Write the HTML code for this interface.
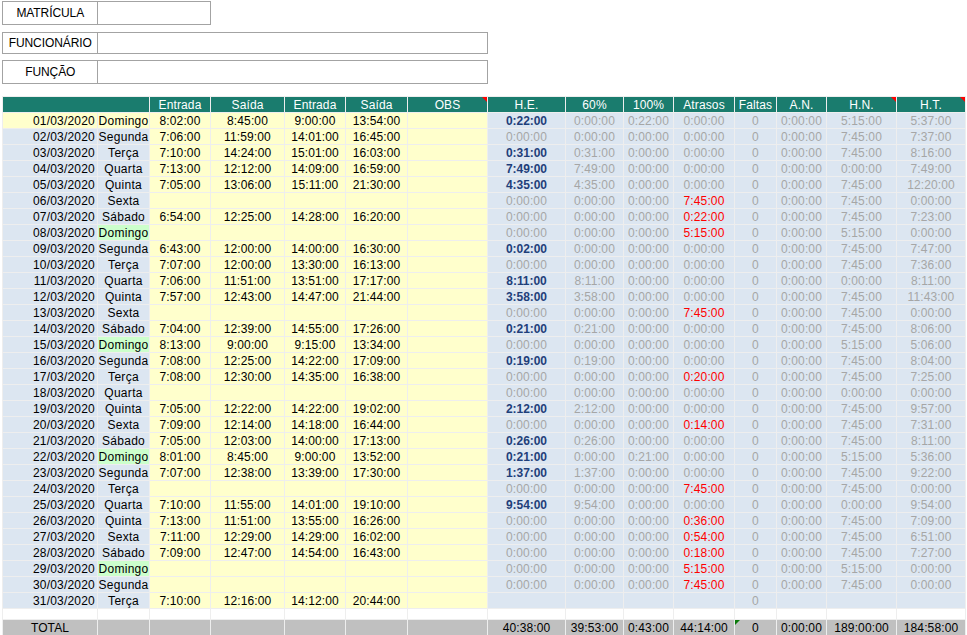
<!DOCTYPE html>
<html lang="pt-BR"><head><meta charset="utf-8"><title>Folha de ponto</title>
<style>
html,body{margin:0;padding:0;background:#fff}
body{width:967px;height:635px;position:relative;overflow:hidden;font-family:"Liberation Sans",Arial,sans-serif;font-size:12px;color:#000}
.box{position:absolute;border:1px solid #a3a3a3;box-sizing:border-box;background:#fff}
.box span{letter-spacing:-0.08px;text-indent:0.5px;position:absolute;left:0;top:0;width:94px;height:100%;border-right:1px solid #a3a3a3;text-align:center;box-sizing:content-box}
.grid{position:absolute;left:2px;top:96px;width:964px;height:539px;background:#eee}
.c{position:absolute;text-align:center;line-height:16px;white-space:nowrap;overflow:visible;letter-spacing:0.12px}
.h{background:#1a7c6e;color:#fff}
.y{background:#ffffcc}
.b{background:#dce6f1}
.g{background:#ccffcc}
.w{background:#fff}
.t{background:#c0c0c0}
.dt{text-align:right;box-sizing:border-box;padding-right:2px;letter-spacing:0.2px}
.gy{color:#a6a6a6}
.rd{color:#f00}
.bb{color:#1f3f7a;font-weight:bold;letter-spacing:-0.05px}
.wd{letter-spacing:0.3px}
.r{position:absolute;right:0;top:0;width:0;height:0;border-top:5px solid #f00;border-left:5px solid transparent}
.gt{position:absolute;left:0;top:0;width:0;height:0;border-top:5px solid #0a7a0a;border-right:5px solid transparent}
</style></head><body>
<div class="box" style="left:2px;top:1px;width:209px;height:24px"><span style="line-height:22px">MATRÍCULA</span></div>
<div class="box" style="left:2px;top:32px;width:486px;height:22px"><span style="line-height:20px">FUNCIONÁRIO</span></div>
<div class="box" style="left:2px;top:60px;width:486px;height:24px"><span style="line-height:22px">FUNÇÃO</span></div>
<div class="grid"></div>
<div class="c h" style="left:3px;top:97px;width:146px;height:15px"></div>
<div class="c h" style="left:150px;top:97px;width:60px;height:15px">Entrada</div>
<div class="c h" style="left:211px;top:97px;width:73px;height:15px">Saída</div>
<div class="c h" style="left:285px;top:97px;width:60px;height:15px">Entrada</div>
<div class="c h" style="left:346px;top:97px;width:61px;height:15px">Saída</div>
<div class="c h" style="left:408px;top:97px;width:79px;height:15px">OBS<i class="r"></i></div>
<div class="c h" style="left:488px;top:97px;width:77px;height:15px">H.E.</div>
<div class="c h" style="left:566px;top:97px;width:57px;height:15px">60%</div>
<div class="c h" style="left:624px;top:97px;width:49px;height:15px">100%</div>
<div class="c h" style="left:674px;top:97px;width:60px;height:15px">Atrasos</div>
<div class="c h" style="left:735px;top:97px;width:41px;height:15px">Faltas</div>
<div class="c h" style="left:777px;top:97px;width:49px;height:15px">A.N.</div>
<div class="c h" style="left:827px;top:97px;width:69px;height:15px">H.N.<i class="r"></i></div>
<div class="c h" style="left:897px;top:97px;width:68px;height:15px">H.T.<i class="r"></i></div>
<div class="c y dt" style="left:3px;top:113px;width:94px;height:15px">01/03/2020</div>
<div class="c y wd" style="left:98px;top:113px;width:51px;height:15px">Domingo</div>
<div class="c y" style="left:150px;top:113px;width:60px;height:15px">8:02:00</div>
<div class="c y" style="left:211px;top:113px;width:73px;height:15px">8:45:00</div>
<div class="c y" style="left:285px;top:113px;width:60px;height:15px">9:00:00</div>
<div class="c y" style="left:346px;top:113px;width:61px;height:15px">13:54:00</div>
<div class="c y" style="left:408px;top:113px;width:79px;height:15px"></div>
<div class="c b bb" style="left:488px;top:113px;width:77px;height:15px">0:22:00</div>
<div class="c b gy" style="left:566px;top:113px;width:57px;height:15px">0:00:00</div>
<div class="c b gy" style="left:624px;top:113px;width:49px;height:15px">0:22:00</div>
<div class="c b gy" style="left:674px;top:113px;width:60px;height:15px">0:00:00</div>
<div class="c b gy" style="left:735px;top:113px;width:41px;height:15px">0</div>
<div class="c b gy" style="left:777px;top:113px;width:49px;height:15px">0:00:00</div>
<div class="c b gy" style="left:827px;top:113px;width:69px;height:15px">5:15:00</div>
<div class="c b gy" style="left:897px;top:113px;width:68px;height:15px">5:37:00</div>
<div class="c b dt" style="left:3px;top:129px;width:94px;height:15px">02/03/2020</div>
<div class="c b wd" style="left:98px;top:129px;width:51px;height:15px">Segunda</div>
<div class="c y" style="left:150px;top:129px;width:60px;height:15px">7:06:00</div>
<div class="c y" style="left:211px;top:129px;width:73px;height:15px">11:59:00</div>
<div class="c y" style="left:285px;top:129px;width:60px;height:15px">14:01:00</div>
<div class="c y" style="left:346px;top:129px;width:61px;height:15px">16:45:00</div>
<div class="c y" style="left:408px;top:129px;width:79px;height:15px"></div>
<div class="c b gy" style="left:488px;top:129px;width:77px;height:15px">0:00:00</div>
<div class="c b gy" style="left:566px;top:129px;width:57px;height:15px">0:00:00</div>
<div class="c b gy" style="left:624px;top:129px;width:49px;height:15px">0:00:00</div>
<div class="c b gy" style="left:674px;top:129px;width:60px;height:15px">0:00:00</div>
<div class="c b gy" style="left:735px;top:129px;width:41px;height:15px">0</div>
<div class="c b gy" style="left:777px;top:129px;width:49px;height:15px">0:00:00</div>
<div class="c b gy" style="left:827px;top:129px;width:69px;height:15px">7:45:00</div>
<div class="c b gy" style="left:897px;top:129px;width:68px;height:15px">7:37:00</div>
<div class="c b dt" style="left:3px;top:145px;width:94px;height:15px">03/03/2020</div>
<div class="c b wd" style="left:98px;top:145px;width:51px;height:15px">Terça</div>
<div class="c y" style="left:150px;top:145px;width:60px;height:15px">7:10:00</div>
<div class="c y" style="left:211px;top:145px;width:73px;height:15px">14:24:00</div>
<div class="c y" style="left:285px;top:145px;width:60px;height:15px">15:01:00</div>
<div class="c y" style="left:346px;top:145px;width:61px;height:15px">16:03:00</div>
<div class="c y" style="left:408px;top:145px;width:79px;height:15px"></div>
<div class="c b bb" style="left:488px;top:145px;width:77px;height:15px">0:31:00</div>
<div class="c b gy" style="left:566px;top:145px;width:57px;height:15px">0:31:00</div>
<div class="c b gy" style="left:624px;top:145px;width:49px;height:15px">0:00:00</div>
<div class="c b gy" style="left:674px;top:145px;width:60px;height:15px">0:00:00</div>
<div class="c b gy" style="left:735px;top:145px;width:41px;height:15px">0</div>
<div class="c b gy" style="left:777px;top:145px;width:49px;height:15px">0:00:00</div>
<div class="c b gy" style="left:827px;top:145px;width:69px;height:15px">7:45:00</div>
<div class="c b gy" style="left:897px;top:145px;width:68px;height:15px">8:16:00</div>
<div class="c b dt" style="left:3px;top:161px;width:94px;height:15px">04/03/2020</div>
<div class="c b wd" style="left:98px;top:161px;width:51px;height:15px">Quarta</div>
<div class="c y" style="left:150px;top:161px;width:60px;height:15px">7:13:00</div>
<div class="c y" style="left:211px;top:161px;width:73px;height:15px">12:12:00</div>
<div class="c y" style="left:285px;top:161px;width:60px;height:15px">14:09:00</div>
<div class="c y" style="left:346px;top:161px;width:61px;height:15px">16:59:00</div>
<div class="c y" style="left:408px;top:161px;width:79px;height:15px"></div>
<div class="c b bb" style="left:488px;top:161px;width:77px;height:15px">7:49:00</div>
<div class="c b gy" style="left:566px;top:161px;width:57px;height:15px">7:49:00</div>
<div class="c b gy" style="left:624px;top:161px;width:49px;height:15px">0:00:00</div>
<div class="c b gy" style="left:674px;top:161px;width:60px;height:15px">0:00:00</div>
<div class="c b gy" style="left:735px;top:161px;width:41px;height:15px">0</div>
<div class="c b gy" style="left:777px;top:161px;width:49px;height:15px">0:00:00</div>
<div class="c b gy" style="left:827px;top:161px;width:69px;height:15px">0:00:00</div>
<div class="c b gy" style="left:897px;top:161px;width:68px;height:15px">7:49:00</div>
<div class="c b dt" style="left:3px;top:177px;width:94px;height:15px">05/03/2020</div>
<div class="c b wd" style="left:98px;top:177px;width:51px;height:15px">Quinta</div>
<div class="c y" style="left:150px;top:177px;width:60px;height:15px">7:05:00</div>
<div class="c y" style="left:211px;top:177px;width:73px;height:15px">13:06:00</div>
<div class="c y" style="left:285px;top:177px;width:60px;height:15px">15:11:00</div>
<div class="c y" style="left:346px;top:177px;width:61px;height:15px">21:30:00</div>
<div class="c y" style="left:408px;top:177px;width:79px;height:15px"></div>
<div class="c b bb" style="left:488px;top:177px;width:77px;height:15px">4:35:00</div>
<div class="c b gy" style="left:566px;top:177px;width:57px;height:15px">4:35:00</div>
<div class="c b gy" style="left:624px;top:177px;width:49px;height:15px">0:00:00</div>
<div class="c b gy" style="left:674px;top:177px;width:60px;height:15px">0:00:00</div>
<div class="c b gy" style="left:735px;top:177px;width:41px;height:15px">0</div>
<div class="c b gy" style="left:777px;top:177px;width:49px;height:15px">0:00:00</div>
<div class="c b gy" style="left:827px;top:177px;width:69px;height:15px">7:45:00</div>
<div class="c b gy" style="left:897px;top:177px;width:68px;height:15px">12:20:00</div>
<div class="c b dt" style="left:3px;top:193px;width:94px;height:15px">06/03/2020</div>
<div class="c b wd" style="left:98px;top:193px;width:51px;height:15px">Sexta</div>
<div class="c y" style="left:150px;top:193px;width:60px;height:15px"></div>
<div class="c y" style="left:211px;top:193px;width:73px;height:15px"></div>
<div class="c y" style="left:285px;top:193px;width:60px;height:15px"></div>
<div class="c y" style="left:346px;top:193px;width:61px;height:15px"></div>
<div class="c y" style="left:408px;top:193px;width:79px;height:15px"></div>
<div class="c b gy" style="left:488px;top:193px;width:77px;height:15px">0:00:00</div>
<div class="c b gy" style="left:566px;top:193px;width:57px;height:15px">0:00:00</div>
<div class="c b gy" style="left:624px;top:193px;width:49px;height:15px">0:00:00</div>
<div class="c b rd" style="left:674px;top:193px;width:60px;height:15px">7:45:00</div>
<div class="c b gy" style="left:735px;top:193px;width:41px;height:15px">0</div>
<div class="c b gy" style="left:777px;top:193px;width:49px;height:15px">0:00:00</div>
<div class="c b gy" style="left:827px;top:193px;width:69px;height:15px">7:45:00</div>
<div class="c b gy" style="left:897px;top:193px;width:68px;height:15px">0:00:00</div>
<div class="c b dt" style="left:3px;top:209px;width:94px;height:15px">07/03/2020</div>
<div class="c b wd" style="left:98px;top:209px;width:51px;height:15px">Sábado</div>
<div class="c y" style="left:150px;top:209px;width:60px;height:15px">6:54:00</div>
<div class="c y" style="left:211px;top:209px;width:73px;height:15px">12:25:00</div>
<div class="c y" style="left:285px;top:209px;width:60px;height:15px">14:28:00</div>
<div class="c y" style="left:346px;top:209px;width:61px;height:15px">16:20:00</div>
<div class="c y" style="left:408px;top:209px;width:79px;height:15px"></div>
<div class="c b gy" style="left:488px;top:209px;width:77px;height:15px">0:00:00</div>
<div class="c b gy" style="left:566px;top:209px;width:57px;height:15px">0:00:00</div>
<div class="c b gy" style="left:624px;top:209px;width:49px;height:15px">0:00:00</div>
<div class="c b rd" style="left:674px;top:209px;width:60px;height:15px">0:22:00</div>
<div class="c b gy" style="left:735px;top:209px;width:41px;height:15px">0</div>
<div class="c b gy" style="left:777px;top:209px;width:49px;height:15px">0:00:00</div>
<div class="c b gy" style="left:827px;top:209px;width:69px;height:15px">7:45:00</div>
<div class="c b gy" style="left:897px;top:209px;width:68px;height:15px">7:23:00</div>
<div class="c b dt" style="left:3px;top:225px;width:94px;height:15px">08/03/2020</div>
<div class="c g wd" style="left:98px;top:225px;width:51px;height:15px">Domingo</div>
<div class="c y" style="left:150px;top:225px;width:60px;height:15px"></div>
<div class="c y" style="left:211px;top:225px;width:73px;height:15px"></div>
<div class="c y" style="left:285px;top:225px;width:60px;height:15px"></div>
<div class="c y" style="left:346px;top:225px;width:61px;height:15px"></div>
<div class="c y" style="left:408px;top:225px;width:79px;height:15px"></div>
<div class="c b gy" style="left:488px;top:225px;width:77px;height:15px">0:00:00</div>
<div class="c b gy" style="left:566px;top:225px;width:57px;height:15px">0:00:00</div>
<div class="c b gy" style="left:624px;top:225px;width:49px;height:15px">0:00:00</div>
<div class="c b rd" style="left:674px;top:225px;width:60px;height:15px">5:15:00</div>
<div class="c b gy" style="left:735px;top:225px;width:41px;height:15px">0</div>
<div class="c b gy" style="left:777px;top:225px;width:49px;height:15px">0:00:00</div>
<div class="c b gy" style="left:827px;top:225px;width:69px;height:15px">5:15:00</div>
<div class="c b gy" style="left:897px;top:225px;width:68px;height:15px">0:00:00</div>
<div class="c b dt" style="left:3px;top:241px;width:94px;height:15px">09/03/2020</div>
<div class="c b wd" style="left:98px;top:241px;width:51px;height:15px">Segunda</div>
<div class="c y" style="left:150px;top:241px;width:60px;height:15px">6:43:00</div>
<div class="c y" style="left:211px;top:241px;width:73px;height:15px">12:00:00</div>
<div class="c y" style="left:285px;top:241px;width:60px;height:15px">14:00:00</div>
<div class="c y" style="left:346px;top:241px;width:61px;height:15px">16:30:00</div>
<div class="c y" style="left:408px;top:241px;width:79px;height:15px"></div>
<div class="c b bb" style="left:488px;top:241px;width:77px;height:15px">0:02:00</div>
<div class="c b gy" style="left:566px;top:241px;width:57px;height:15px">0:00:00</div>
<div class="c b gy" style="left:624px;top:241px;width:49px;height:15px">0:00:00</div>
<div class="c b gy" style="left:674px;top:241px;width:60px;height:15px">0:00:00</div>
<div class="c b gy" style="left:735px;top:241px;width:41px;height:15px">0</div>
<div class="c b gy" style="left:777px;top:241px;width:49px;height:15px">0:00:00</div>
<div class="c b gy" style="left:827px;top:241px;width:69px;height:15px">7:45:00</div>
<div class="c b gy" style="left:897px;top:241px;width:68px;height:15px">7:47:00</div>
<div class="c b dt" style="left:3px;top:257px;width:94px;height:15px">10/03/2020</div>
<div class="c b wd" style="left:98px;top:257px;width:51px;height:15px">Terça</div>
<div class="c y" style="left:150px;top:257px;width:60px;height:15px">7:07:00</div>
<div class="c y" style="left:211px;top:257px;width:73px;height:15px">12:00:00</div>
<div class="c y" style="left:285px;top:257px;width:60px;height:15px">13:30:00</div>
<div class="c y" style="left:346px;top:257px;width:61px;height:15px">16:13:00</div>
<div class="c y" style="left:408px;top:257px;width:79px;height:15px"></div>
<div class="c b gy" style="left:488px;top:257px;width:77px;height:15px">0:00:00</div>
<div class="c b gy" style="left:566px;top:257px;width:57px;height:15px">0:00:00</div>
<div class="c b gy" style="left:624px;top:257px;width:49px;height:15px">0:00:00</div>
<div class="c b gy" style="left:674px;top:257px;width:60px;height:15px">0:00:00</div>
<div class="c b gy" style="left:735px;top:257px;width:41px;height:15px">0</div>
<div class="c b gy" style="left:777px;top:257px;width:49px;height:15px">0:00:00</div>
<div class="c b gy" style="left:827px;top:257px;width:69px;height:15px">7:45:00</div>
<div class="c b gy" style="left:897px;top:257px;width:68px;height:15px">7:36:00</div>
<div class="c b dt" style="left:3px;top:273px;width:94px;height:15px">11/03/2020</div>
<div class="c b wd" style="left:98px;top:273px;width:51px;height:15px">Quarta</div>
<div class="c y" style="left:150px;top:273px;width:60px;height:15px">7:06:00</div>
<div class="c y" style="left:211px;top:273px;width:73px;height:15px">11:51:00</div>
<div class="c y" style="left:285px;top:273px;width:60px;height:15px">13:51:00</div>
<div class="c y" style="left:346px;top:273px;width:61px;height:15px">17:17:00</div>
<div class="c y" style="left:408px;top:273px;width:79px;height:15px"></div>
<div class="c b bb" style="left:488px;top:273px;width:77px;height:15px">8:11:00</div>
<div class="c b gy" style="left:566px;top:273px;width:57px;height:15px">8:11:00</div>
<div class="c b gy" style="left:624px;top:273px;width:49px;height:15px">0:00:00</div>
<div class="c b gy" style="left:674px;top:273px;width:60px;height:15px">0:00:00</div>
<div class="c b gy" style="left:735px;top:273px;width:41px;height:15px">0</div>
<div class="c b gy" style="left:777px;top:273px;width:49px;height:15px">0:00:00</div>
<div class="c b gy" style="left:827px;top:273px;width:69px;height:15px">0:00:00</div>
<div class="c b gy" style="left:897px;top:273px;width:68px;height:15px">8:11:00</div>
<div class="c b dt" style="left:3px;top:289px;width:94px;height:15px">12/03/2020</div>
<div class="c b wd" style="left:98px;top:289px;width:51px;height:15px">Quinta</div>
<div class="c y" style="left:150px;top:289px;width:60px;height:15px">7:57:00</div>
<div class="c y" style="left:211px;top:289px;width:73px;height:15px">12:43:00</div>
<div class="c y" style="left:285px;top:289px;width:60px;height:15px">14:47:00</div>
<div class="c y" style="left:346px;top:289px;width:61px;height:15px">21:44:00</div>
<div class="c y" style="left:408px;top:289px;width:79px;height:15px"></div>
<div class="c b bb" style="left:488px;top:289px;width:77px;height:15px">3:58:00</div>
<div class="c b gy" style="left:566px;top:289px;width:57px;height:15px">3:58:00</div>
<div class="c b gy" style="left:624px;top:289px;width:49px;height:15px">0:00:00</div>
<div class="c b gy" style="left:674px;top:289px;width:60px;height:15px">0:00:00</div>
<div class="c b gy" style="left:735px;top:289px;width:41px;height:15px">0</div>
<div class="c b gy" style="left:777px;top:289px;width:49px;height:15px">0:00:00</div>
<div class="c b gy" style="left:827px;top:289px;width:69px;height:15px">7:45:00</div>
<div class="c b gy" style="left:897px;top:289px;width:68px;height:15px">11:43:00</div>
<div class="c b dt" style="left:3px;top:305px;width:94px;height:15px">13/03/2020</div>
<div class="c b wd" style="left:98px;top:305px;width:51px;height:15px">Sexta</div>
<div class="c y" style="left:150px;top:305px;width:60px;height:15px"></div>
<div class="c y" style="left:211px;top:305px;width:73px;height:15px"></div>
<div class="c y" style="left:285px;top:305px;width:60px;height:15px"></div>
<div class="c y" style="left:346px;top:305px;width:61px;height:15px"></div>
<div class="c y" style="left:408px;top:305px;width:79px;height:15px"></div>
<div class="c b gy" style="left:488px;top:305px;width:77px;height:15px">0:00:00</div>
<div class="c b gy" style="left:566px;top:305px;width:57px;height:15px">0:00:00</div>
<div class="c b gy" style="left:624px;top:305px;width:49px;height:15px">0:00:00</div>
<div class="c b rd" style="left:674px;top:305px;width:60px;height:15px">7:45:00</div>
<div class="c b gy" style="left:735px;top:305px;width:41px;height:15px">0</div>
<div class="c b gy" style="left:777px;top:305px;width:49px;height:15px">0:00:00</div>
<div class="c b gy" style="left:827px;top:305px;width:69px;height:15px">7:45:00</div>
<div class="c b gy" style="left:897px;top:305px;width:68px;height:15px">0:00:00</div>
<div class="c b dt" style="left:3px;top:321px;width:94px;height:15px">14/03/2020</div>
<div class="c b wd" style="left:98px;top:321px;width:51px;height:15px">Sábado</div>
<div class="c y" style="left:150px;top:321px;width:60px;height:15px">7:04:00</div>
<div class="c y" style="left:211px;top:321px;width:73px;height:15px">12:39:00</div>
<div class="c y" style="left:285px;top:321px;width:60px;height:15px">14:55:00</div>
<div class="c y" style="left:346px;top:321px;width:61px;height:15px">17:26:00</div>
<div class="c y" style="left:408px;top:321px;width:79px;height:15px"></div>
<div class="c b bb" style="left:488px;top:321px;width:77px;height:15px">0:21:00</div>
<div class="c b gy" style="left:566px;top:321px;width:57px;height:15px">0:21:00</div>
<div class="c b gy" style="left:624px;top:321px;width:49px;height:15px">0:00:00</div>
<div class="c b gy" style="left:674px;top:321px;width:60px;height:15px">0:00:00</div>
<div class="c b gy" style="left:735px;top:321px;width:41px;height:15px">0</div>
<div class="c b gy" style="left:777px;top:321px;width:49px;height:15px">0:00:00</div>
<div class="c b gy" style="left:827px;top:321px;width:69px;height:15px">7:45:00</div>
<div class="c b gy" style="left:897px;top:321px;width:68px;height:15px">8:06:00</div>
<div class="c b dt" style="left:3px;top:337px;width:94px;height:15px">15/03/2020</div>
<div class="c g wd" style="left:98px;top:337px;width:51px;height:15px">Domingo</div>
<div class="c y" style="left:150px;top:337px;width:60px;height:15px">8:13:00</div>
<div class="c y" style="left:211px;top:337px;width:73px;height:15px">9:00:00</div>
<div class="c y" style="left:285px;top:337px;width:60px;height:15px">9:15:00</div>
<div class="c y" style="left:346px;top:337px;width:61px;height:15px">13:34:00</div>
<div class="c y" style="left:408px;top:337px;width:79px;height:15px"></div>
<div class="c b gy" style="left:488px;top:337px;width:77px;height:15px">0:00:00</div>
<div class="c b gy" style="left:566px;top:337px;width:57px;height:15px">0:00:00</div>
<div class="c b gy" style="left:624px;top:337px;width:49px;height:15px">0:00:00</div>
<div class="c b gy" style="left:674px;top:337px;width:60px;height:15px">0:00:00</div>
<div class="c b gy" style="left:735px;top:337px;width:41px;height:15px">0</div>
<div class="c b gy" style="left:777px;top:337px;width:49px;height:15px">0:00:00</div>
<div class="c b gy" style="left:827px;top:337px;width:69px;height:15px">5:15:00</div>
<div class="c b gy" style="left:897px;top:337px;width:68px;height:15px">5:06:00</div>
<div class="c b dt" style="left:3px;top:353px;width:94px;height:15px">16/03/2020</div>
<div class="c b wd" style="left:98px;top:353px;width:51px;height:15px">Segunda</div>
<div class="c y" style="left:150px;top:353px;width:60px;height:15px">7:08:00</div>
<div class="c y" style="left:211px;top:353px;width:73px;height:15px">12:25:00</div>
<div class="c y" style="left:285px;top:353px;width:60px;height:15px">14:22:00</div>
<div class="c y" style="left:346px;top:353px;width:61px;height:15px">17:09:00</div>
<div class="c y" style="left:408px;top:353px;width:79px;height:15px"></div>
<div class="c b bb" style="left:488px;top:353px;width:77px;height:15px">0:19:00</div>
<div class="c b gy" style="left:566px;top:353px;width:57px;height:15px">0:19:00</div>
<div class="c b gy" style="left:624px;top:353px;width:49px;height:15px">0:00:00</div>
<div class="c b gy" style="left:674px;top:353px;width:60px;height:15px">0:00:00</div>
<div class="c b gy" style="left:735px;top:353px;width:41px;height:15px">0</div>
<div class="c b gy" style="left:777px;top:353px;width:49px;height:15px">0:00:00</div>
<div class="c b gy" style="left:827px;top:353px;width:69px;height:15px">7:45:00</div>
<div class="c b gy" style="left:897px;top:353px;width:68px;height:15px">8:04:00</div>
<div class="c b dt" style="left:3px;top:369px;width:94px;height:15px">17/03/2020</div>
<div class="c b wd" style="left:98px;top:369px;width:51px;height:15px">Terça</div>
<div class="c y" style="left:150px;top:369px;width:60px;height:15px">7:08:00</div>
<div class="c y" style="left:211px;top:369px;width:73px;height:15px">12:30:00</div>
<div class="c y" style="left:285px;top:369px;width:60px;height:15px">14:35:00</div>
<div class="c y" style="left:346px;top:369px;width:61px;height:15px">16:38:00</div>
<div class="c y" style="left:408px;top:369px;width:79px;height:15px"></div>
<div class="c b gy" style="left:488px;top:369px;width:77px;height:15px">0:00:00</div>
<div class="c b gy" style="left:566px;top:369px;width:57px;height:15px">0:00:00</div>
<div class="c b gy" style="left:624px;top:369px;width:49px;height:15px">0:00:00</div>
<div class="c b rd" style="left:674px;top:369px;width:60px;height:15px">0:20:00</div>
<div class="c b gy" style="left:735px;top:369px;width:41px;height:15px">0</div>
<div class="c b gy" style="left:777px;top:369px;width:49px;height:15px">0:00:00</div>
<div class="c b gy" style="left:827px;top:369px;width:69px;height:15px">7:45:00</div>
<div class="c b gy" style="left:897px;top:369px;width:68px;height:15px">7:25:00</div>
<div class="c b dt" style="left:3px;top:385px;width:94px;height:15px">18/03/2020</div>
<div class="c b wd" style="left:98px;top:385px;width:51px;height:15px">Quarta</div>
<div class="c y" style="left:150px;top:385px;width:60px;height:15px"></div>
<div class="c y" style="left:211px;top:385px;width:73px;height:15px"></div>
<div class="c y" style="left:285px;top:385px;width:60px;height:15px"></div>
<div class="c y" style="left:346px;top:385px;width:61px;height:15px"></div>
<div class="c y" style="left:408px;top:385px;width:79px;height:15px"></div>
<div class="c b gy" style="left:488px;top:385px;width:77px;height:15px">0:00:00</div>
<div class="c b gy" style="left:566px;top:385px;width:57px;height:15px">0:00:00</div>
<div class="c b gy" style="left:624px;top:385px;width:49px;height:15px">0:00:00</div>
<div class="c b gy" style="left:674px;top:385px;width:60px;height:15px">0:00:00</div>
<div class="c b gy" style="left:735px;top:385px;width:41px;height:15px">0</div>
<div class="c b gy" style="left:777px;top:385px;width:49px;height:15px">0:00:00</div>
<div class="c b gy" style="left:827px;top:385px;width:69px;height:15px">0:00:00</div>
<div class="c b gy" style="left:897px;top:385px;width:68px;height:15px">0:00:00</div>
<div class="c b dt" style="left:3px;top:401px;width:94px;height:15px">19/03/2020</div>
<div class="c b wd" style="left:98px;top:401px;width:51px;height:15px">Quinta</div>
<div class="c y" style="left:150px;top:401px;width:60px;height:15px">7:05:00</div>
<div class="c y" style="left:211px;top:401px;width:73px;height:15px">12:22:00</div>
<div class="c y" style="left:285px;top:401px;width:60px;height:15px">14:22:00</div>
<div class="c y" style="left:346px;top:401px;width:61px;height:15px">19:02:00</div>
<div class="c y" style="left:408px;top:401px;width:79px;height:15px"></div>
<div class="c b bb" style="left:488px;top:401px;width:77px;height:15px">2:12:00</div>
<div class="c b gy" style="left:566px;top:401px;width:57px;height:15px">2:12:00</div>
<div class="c b gy" style="left:624px;top:401px;width:49px;height:15px">0:00:00</div>
<div class="c b gy" style="left:674px;top:401px;width:60px;height:15px">0:00:00</div>
<div class="c b gy" style="left:735px;top:401px;width:41px;height:15px">0</div>
<div class="c b gy" style="left:777px;top:401px;width:49px;height:15px">0:00:00</div>
<div class="c b gy" style="left:827px;top:401px;width:69px;height:15px">7:45:00</div>
<div class="c b gy" style="left:897px;top:401px;width:68px;height:15px">9:57:00</div>
<div class="c b dt" style="left:3px;top:417px;width:94px;height:15px">20/03/2020</div>
<div class="c b wd" style="left:98px;top:417px;width:51px;height:15px">Sexta</div>
<div class="c y" style="left:150px;top:417px;width:60px;height:15px">7:09:00</div>
<div class="c y" style="left:211px;top:417px;width:73px;height:15px">12:14:00</div>
<div class="c y" style="left:285px;top:417px;width:60px;height:15px">14:18:00</div>
<div class="c y" style="left:346px;top:417px;width:61px;height:15px">16:44:00</div>
<div class="c y" style="left:408px;top:417px;width:79px;height:15px"></div>
<div class="c b gy" style="left:488px;top:417px;width:77px;height:15px">0:00:00</div>
<div class="c b gy" style="left:566px;top:417px;width:57px;height:15px">0:00:00</div>
<div class="c b gy" style="left:624px;top:417px;width:49px;height:15px">0:00:00</div>
<div class="c b rd" style="left:674px;top:417px;width:60px;height:15px">0:14:00</div>
<div class="c b gy" style="left:735px;top:417px;width:41px;height:15px">0</div>
<div class="c b gy" style="left:777px;top:417px;width:49px;height:15px">0:00:00</div>
<div class="c b gy" style="left:827px;top:417px;width:69px;height:15px">7:45:00</div>
<div class="c b gy" style="left:897px;top:417px;width:68px;height:15px">7:31:00</div>
<div class="c b dt" style="left:3px;top:433px;width:94px;height:15px">21/03/2020</div>
<div class="c b wd" style="left:98px;top:433px;width:51px;height:15px">Sábado</div>
<div class="c y" style="left:150px;top:433px;width:60px;height:15px">7:05:00</div>
<div class="c y" style="left:211px;top:433px;width:73px;height:15px">12:03:00</div>
<div class="c y" style="left:285px;top:433px;width:60px;height:15px">14:00:00</div>
<div class="c y" style="left:346px;top:433px;width:61px;height:15px">17:13:00</div>
<div class="c y" style="left:408px;top:433px;width:79px;height:15px"></div>
<div class="c b bb" style="left:488px;top:433px;width:77px;height:15px">0:26:00</div>
<div class="c b gy" style="left:566px;top:433px;width:57px;height:15px">0:26:00</div>
<div class="c b gy" style="left:624px;top:433px;width:49px;height:15px">0:00:00</div>
<div class="c b gy" style="left:674px;top:433px;width:60px;height:15px">0:00:00</div>
<div class="c b gy" style="left:735px;top:433px;width:41px;height:15px">0</div>
<div class="c b gy" style="left:777px;top:433px;width:49px;height:15px">0:00:00</div>
<div class="c b gy" style="left:827px;top:433px;width:69px;height:15px">7:45:00</div>
<div class="c b gy" style="left:897px;top:433px;width:68px;height:15px">8:11:00</div>
<div class="c b dt" style="left:3px;top:449px;width:94px;height:15px">22/03/2020</div>
<div class="c g wd" style="left:98px;top:449px;width:51px;height:15px">Domingo</div>
<div class="c y" style="left:150px;top:449px;width:60px;height:15px">8:01:00</div>
<div class="c y" style="left:211px;top:449px;width:73px;height:15px">8:45:00</div>
<div class="c y" style="left:285px;top:449px;width:60px;height:15px">9:00:00</div>
<div class="c y" style="left:346px;top:449px;width:61px;height:15px">13:52:00</div>
<div class="c y" style="left:408px;top:449px;width:79px;height:15px"></div>
<div class="c b bb" style="left:488px;top:449px;width:77px;height:15px">0:21:00</div>
<div class="c b gy" style="left:566px;top:449px;width:57px;height:15px">0:00:00</div>
<div class="c b gy" style="left:624px;top:449px;width:49px;height:15px">0:21:00</div>
<div class="c b gy" style="left:674px;top:449px;width:60px;height:15px">0:00:00</div>
<div class="c b gy" style="left:735px;top:449px;width:41px;height:15px">0</div>
<div class="c b gy" style="left:777px;top:449px;width:49px;height:15px">0:00:00</div>
<div class="c b gy" style="left:827px;top:449px;width:69px;height:15px">5:15:00</div>
<div class="c b gy" style="left:897px;top:449px;width:68px;height:15px">5:36:00</div>
<div class="c b dt" style="left:3px;top:465px;width:94px;height:15px">23/03/2020</div>
<div class="c b wd" style="left:98px;top:465px;width:51px;height:15px">Segunda</div>
<div class="c y" style="left:150px;top:465px;width:60px;height:15px">7:07:00</div>
<div class="c y" style="left:211px;top:465px;width:73px;height:15px">12:38:00</div>
<div class="c y" style="left:285px;top:465px;width:60px;height:15px">13:39:00</div>
<div class="c y" style="left:346px;top:465px;width:61px;height:15px">17:30:00</div>
<div class="c y" style="left:408px;top:465px;width:79px;height:15px"></div>
<div class="c b bb" style="left:488px;top:465px;width:77px;height:15px">1:37:00</div>
<div class="c b gy" style="left:566px;top:465px;width:57px;height:15px">1:37:00</div>
<div class="c b gy" style="left:624px;top:465px;width:49px;height:15px">0:00:00</div>
<div class="c b gy" style="left:674px;top:465px;width:60px;height:15px">0:00:00</div>
<div class="c b gy" style="left:735px;top:465px;width:41px;height:15px">0</div>
<div class="c b gy" style="left:777px;top:465px;width:49px;height:15px">0:00:00</div>
<div class="c b gy" style="left:827px;top:465px;width:69px;height:15px">7:45:00</div>
<div class="c b gy" style="left:897px;top:465px;width:68px;height:15px">9:22:00</div>
<div class="c b dt" style="left:3px;top:481px;width:94px;height:15px">24/03/2020</div>
<div class="c b wd" style="left:98px;top:481px;width:51px;height:15px">Terça</div>
<div class="c y" style="left:150px;top:481px;width:60px;height:15px"></div>
<div class="c y" style="left:211px;top:481px;width:73px;height:15px"></div>
<div class="c y" style="left:285px;top:481px;width:60px;height:15px"></div>
<div class="c y" style="left:346px;top:481px;width:61px;height:15px"></div>
<div class="c y" style="left:408px;top:481px;width:79px;height:15px"></div>
<div class="c b gy" style="left:488px;top:481px;width:77px;height:15px">0:00:00</div>
<div class="c b gy" style="left:566px;top:481px;width:57px;height:15px">0:00:00</div>
<div class="c b gy" style="left:624px;top:481px;width:49px;height:15px">0:00:00</div>
<div class="c b rd" style="left:674px;top:481px;width:60px;height:15px">7:45:00</div>
<div class="c b gy" style="left:735px;top:481px;width:41px;height:15px">0</div>
<div class="c b gy" style="left:777px;top:481px;width:49px;height:15px">0:00:00</div>
<div class="c b gy" style="left:827px;top:481px;width:69px;height:15px">7:45:00</div>
<div class="c b gy" style="left:897px;top:481px;width:68px;height:15px">0:00:00</div>
<div class="c b dt" style="left:3px;top:497px;width:94px;height:15px">25/03/2020</div>
<div class="c b wd" style="left:98px;top:497px;width:51px;height:15px">Quarta</div>
<div class="c y" style="left:150px;top:497px;width:60px;height:15px">7:10:00</div>
<div class="c y" style="left:211px;top:497px;width:73px;height:15px">11:55:00</div>
<div class="c y" style="left:285px;top:497px;width:60px;height:15px">14:01:00</div>
<div class="c y" style="left:346px;top:497px;width:61px;height:15px">19:10:00</div>
<div class="c y" style="left:408px;top:497px;width:79px;height:15px"></div>
<div class="c b bb" style="left:488px;top:497px;width:77px;height:15px">9:54:00</div>
<div class="c b gy" style="left:566px;top:497px;width:57px;height:15px">9:54:00</div>
<div class="c b gy" style="left:624px;top:497px;width:49px;height:15px">0:00:00</div>
<div class="c b gy" style="left:674px;top:497px;width:60px;height:15px">0:00:00</div>
<div class="c b gy" style="left:735px;top:497px;width:41px;height:15px">0</div>
<div class="c b gy" style="left:777px;top:497px;width:49px;height:15px">0:00:00</div>
<div class="c b gy" style="left:827px;top:497px;width:69px;height:15px">0:00:00</div>
<div class="c b gy" style="left:897px;top:497px;width:68px;height:15px">9:54:00</div>
<div class="c b dt" style="left:3px;top:513px;width:94px;height:15px">26/03/2020</div>
<div class="c b wd" style="left:98px;top:513px;width:51px;height:15px">Quinta</div>
<div class="c y" style="left:150px;top:513px;width:60px;height:15px">7:13:00</div>
<div class="c y" style="left:211px;top:513px;width:73px;height:15px">11:51:00</div>
<div class="c y" style="left:285px;top:513px;width:60px;height:15px">13:55:00</div>
<div class="c y" style="left:346px;top:513px;width:61px;height:15px">16:26:00</div>
<div class="c y" style="left:408px;top:513px;width:79px;height:15px"></div>
<div class="c b gy" style="left:488px;top:513px;width:77px;height:15px">0:00:00</div>
<div class="c b gy" style="left:566px;top:513px;width:57px;height:15px">0:00:00</div>
<div class="c b gy" style="left:624px;top:513px;width:49px;height:15px">0:00:00</div>
<div class="c b rd" style="left:674px;top:513px;width:60px;height:15px">0:36:00</div>
<div class="c b gy" style="left:735px;top:513px;width:41px;height:15px">0</div>
<div class="c b gy" style="left:777px;top:513px;width:49px;height:15px">0:00:00</div>
<div class="c b gy" style="left:827px;top:513px;width:69px;height:15px">7:45:00</div>
<div class="c b gy" style="left:897px;top:513px;width:68px;height:15px">7:09:00</div>
<div class="c b dt" style="left:3px;top:529px;width:94px;height:15px">27/03/2020</div>
<div class="c b wd" style="left:98px;top:529px;width:51px;height:15px">Sexta</div>
<div class="c y" style="left:150px;top:529px;width:60px;height:15px">7:11:00</div>
<div class="c y" style="left:211px;top:529px;width:73px;height:15px">12:29:00</div>
<div class="c y" style="left:285px;top:529px;width:60px;height:15px">14:29:00</div>
<div class="c y" style="left:346px;top:529px;width:61px;height:15px">16:02:00</div>
<div class="c y" style="left:408px;top:529px;width:79px;height:15px"></div>
<div class="c b gy" style="left:488px;top:529px;width:77px;height:15px">0:00:00</div>
<div class="c b gy" style="left:566px;top:529px;width:57px;height:15px">0:00:00</div>
<div class="c b gy" style="left:624px;top:529px;width:49px;height:15px">0:00:00</div>
<div class="c b rd" style="left:674px;top:529px;width:60px;height:15px">0:54:00</div>
<div class="c b gy" style="left:735px;top:529px;width:41px;height:15px">0</div>
<div class="c b gy" style="left:777px;top:529px;width:49px;height:15px">0:00:00</div>
<div class="c b gy" style="left:827px;top:529px;width:69px;height:15px">7:45:00</div>
<div class="c b gy" style="left:897px;top:529px;width:68px;height:15px">6:51:00</div>
<div class="c b dt" style="left:3px;top:545px;width:94px;height:15px">28/03/2020</div>
<div class="c b wd" style="left:98px;top:545px;width:51px;height:15px">Sábado</div>
<div class="c y" style="left:150px;top:545px;width:60px;height:15px">7:09:00</div>
<div class="c y" style="left:211px;top:545px;width:73px;height:15px">12:47:00</div>
<div class="c y" style="left:285px;top:545px;width:60px;height:15px">14:54:00</div>
<div class="c y" style="left:346px;top:545px;width:61px;height:15px">16:43:00</div>
<div class="c y" style="left:408px;top:545px;width:79px;height:15px"></div>
<div class="c b gy" style="left:488px;top:545px;width:77px;height:15px">0:00:00</div>
<div class="c b gy" style="left:566px;top:545px;width:57px;height:15px">0:00:00</div>
<div class="c b gy" style="left:624px;top:545px;width:49px;height:15px">0:00:00</div>
<div class="c b rd" style="left:674px;top:545px;width:60px;height:15px">0:18:00</div>
<div class="c b gy" style="left:735px;top:545px;width:41px;height:15px">0</div>
<div class="c b gy" style="left:777px;top:545px;width:49px;height:15px">0:00:00</div>
<div class="c b gy" style="left:827px;top:545px;width:69px;height:15px">7:45:00</div>
<div class="c b gy" style="left:897px;top:545px;width:68px;height:15px">7:27:00</div>
<div class="c b dt" style="left:3px;top:561px;width:94px;height:15px">29/03/2020</div>
<div class="c g wd" style="left:98px;top:561px;width:51px;height:15px">Domingo</div>
<div class="c y" style="left:150px;top:561px;width:60px;height:15px"></div>
<div class="c y" style="left:211px;top:561px;width:73px;height:15px"></div>
<div class="c y" style="left:285px;top:561px;width:60px;height:15px"></div>
<div class="c y" style="left:346px;top:561px;width:61px;height:15px"></div>
<div class="c y" style="left:408px;top:561px;width:79px;height:15px"></div>
<div class="c b gy" style="left:488px;top:561px;width:77px;height:15px">0:00:00</div>
<div class="c b gy" style="left:566px;top:561px;width:57px;height:15px">0:00:00</div>
<div class="c b gy" style="left:624px;top:561px;width:49px;height:15px">0:00:00</div>
<div class="c b rd" style="left:674px;top:561px;width:60px;height:15px">5:15:00</div>
<div class="c b gy" style="left:735px;top:561px;width:41px;height:15px">0</div>
<div class="c b gy" style="left:777px;top:561px;width:49px;height:15px">0:00:00</div>
<div class="c b gy" style="left:827px;top:561px;width:69px;height:15px">5:15:00</div>
<div class="c b gy" style="left:897px;top:561px;width:68px;height:15px">0:00:00</div>
<div class="c b dt" style="left:3px;top:577px;width:94px;height:15px">30/03/2020</div>
<div class="c b wd" style="left:98px;top:577px;width:51px;height:15px">Segunda</div>
<div class="c y" style="left:150px;top:577px;width:60px;height:15px"></div>
<div class="c y" style="left:211px;top:577px;width:73px;height:15px"></div>
<div class="c y" style="left:285px;top:577px;width:60px;height:15px"></div>
<div class="c y" style="left:346px;top:577px;width:61px;height:15px"></div>
<div class="c y" style="left:408px;top:577px;width:79px;height:15px"></div>
<div class="c b gy" style="left:488px;top:577px;width:77px;height:15px">0:00:00</div>
<div class="c b gy" style="left:566px;top:577px;width:57px;height:15px">0:00:00</div>
<div class="c b gy" style="left:624px;top:577px;width:49px;height:15px">0:00:00</div>
<div class="c b rd" style="left:674px;top:577px;width:60px;height:15px">7:45:00</div>
<div class="c b gy" style="left:735px;top:577px;width:41px;height:15px">0</div>
<div class="c b gy" style="left:777px;top:577px;width:49px;height:15px">0:00:00</div>
<div class="c b gy" style="left:827px;top:577px;width:69px;height:15px">7:45:00</div>
<div class="c b gy" style="left:897px;top:577px;width:68px;height:15px">0:00:00</div>
<div class="c b dt" style="left:3px;top:593px;width:94px;height:15px">31/03/2020</div>
<div class="c b wd" style="left:98px;top:593px;width:51px;height:15px">Terça</div>
<div class="c y" style="left:150px;top:593px;width:60px;height:15px">7:10:00</div>
<div class="c y" style="left:211px;top:593px;width:73px;height:15px">12:16:00</div>
<div class="c y" style="left:285px;top:593px;width:60px;height:15px">14:12:00</div>
<div class="c y" style="left:346px;top:593px;width:61px;height:15px">20:44:00</div>
<div class="c y" style="left:408px;top:593px;width:79px;height:15px"></div>
<div class="c b gy" style="left:488px;top:593px;width:77px;height:15px"></div>
<div class="c b gy" style="left:566px;top:593px;width:57px;height:15px"></div>
<div class="c b gy" style="left:624px;top:593px;width:49px;height:15px"></div>
<div class="c b gy" style="left:674px;top:593px;width:60px;height:15px"></div>
<div class="c b gy" style="left:735px;top:593px;width:41px;height:15px">0</div>
<div class="c b gy" style="left:777px;top:593px;width:49px;height:15px"></div>
<div class="c b gy" style="left:827px;top:593px;width:69px;height:15px"></div>
<div class="c b gy" style="left:897px;top:593px;width:68px;height:15px"></div>
<div class="c w" style="left:3px;top:609px;width:94px;height:10px"></div>
<div class="c w" style="left:98px;top:609px;width:51px;height:10px"></div>
<div class="c w" style="left:150px;top:609px;width:60px;height:10px"></div>
<div class="c w" style="left:211px;top:609px;width:73px;height:10px"></div>
<div class="c w" style="left:285px;top:609px;width:60px;height:10px"></div>
<div class="c w" style="left:346px;top:609px;width:61px;height:10px"></div>
<div class="c w" style="left:408px;top:609px;width:79px;height:10px"></div>
<div class="c w" style="left:488px;top:609px;width:77px;height:10px"></div>
<div class="c w" style="left:566px;top:609px;width:57px;height:10px"></div>
<div class="c w" style="left:624px;top:609px;width:49px;height:10px"></div>
<div class="c w" style="left:674px;top:609px;width:60px;height:10px"></div>
<div class="c w" style="left:735px;top:609px;width:41px;height:10px"></div>
<div class="c w" style="left:777px;top:609px;width:49px;height:10px"></div>
<div class="c w" style="left:827px;top:609px;width:69px;height:10px"></div>
<div class="c w" style="left:897px;top:609px;width:68px;height:10px"></div>
<div class="c t" style="left:3px;top:620px;width:94px;height:15px">TOTAL</div>
<div class="c t" style="left:98px;top:620px;width:51px;height:15px"></div>
<div class="c t" style="left:150px;top:620px;width:60px;height:15px"></div>
<div class="c t" style="left:211px;top:620px;width:73px;height:15px"></div>
<div class="c t" style="left:285px;top:620px;width:60px;height:15px"></div>
<div class="c t" style="left:346px;top:620px;width:61px;height:15px"></div>
<div class="c t" style="left:408px;top:620px;width:79px;height:15px"></div>
<div class="c t" style="left:488px;top:620px;width:77px;height:15px">40:38:00</div>
<div class="c t" style="left:566px;top:620px;width:57px;height:15px">39:53:00</div>
<div class="c t" style="left:624px;top:620px;width:49px;height:15px">0:43:00</div>
<div class="c t" style="left:674px;top:620px;width:60px;height:15px">44:14:00</div>
<div class="c t" style="left:735px;top:620px;width:41px;height:15px">0<i class="gt"></i></div>
<div class="c t" style="left:777px;top:620px;width:49px;height:15px">0:00:00</div>
<div class="c t" style="left:827px;top:620px;width:69px;height:15px">189:00:00</div>
<div class="c t" style="left:897px;top:620px;width:68px;height:15px">184:58:00</div>
</body></html>
